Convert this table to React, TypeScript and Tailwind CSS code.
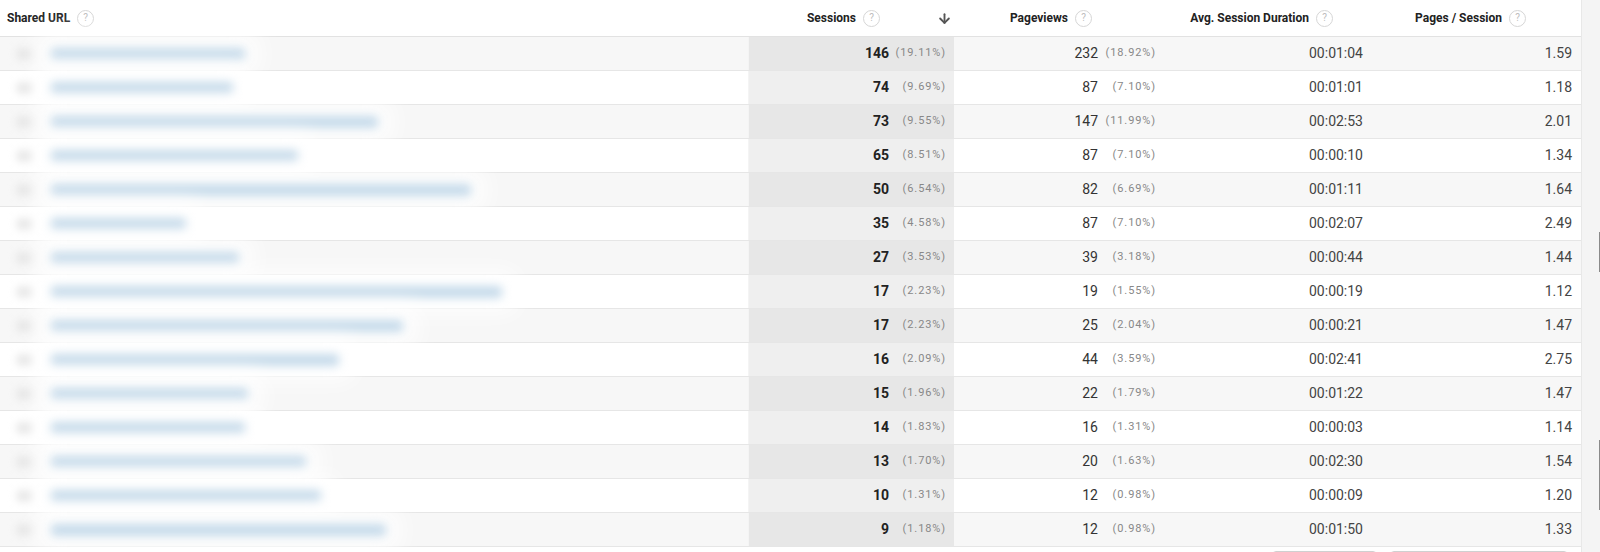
import { ArrowDown } from "lucide-react";

type Row = {
  sessions: string;
  sPct: string;
  pageviews: string;
  pPct: string;
  duration: string;
  pps: string;
  bar: number; // width of blurred url
};

const rows: Row[] = [
  { sessions: "146", sPct: "(19.11%)", pageviews: "232", pPct: "(18.92%)", duration: "00:01:04", pps: "1.59", bar: 194 },
  { sessions: "74", sPct: "(9.69%)", pageviews: "87", pPct: "(7.10%)", duration: "00:01:01", pps: "1.18", bar: 182 },
  { sessions: "73", sPct: "(9.55%)", pageviews: "147", pPct: "(11.99%)", duration: "00:02:53", pps: "2.01", bar: 327 },
  { sessions: "65", sPct: "(8.51%)", pageviews: "87", pPct: "(7.10%)", duration: "00:00:10", pps: "1.34", bar: 247 },
  { sessions: "50", sPct: "(6.54%)", pageviews: "82", pPct: "(6.69%)", duration: "00:01:11", pps: "1.64", bar: 420 },
  { sessions: "35", sPct: "(4.58%)", pageviews: "87", pPct: "(7.10%)", duration: "00:02:07", pps: "2.49", bar: 135 },
  { sessions: "27", sPct: "(3.53%)", pageviews: "39", pPct: "(3.18%)", duration: "00:00:44", pps: "1.44", bar: 188 },
  { sessions: "17", sPct: "(2.23%)", pageviews: "19", pPct: "(1.55%)", duration: "00:00:19", pps: "1.12", bar: 451 },
  { sessions: "17", sPct: "(2.23%)", pageviews: "25", pPct: "(2.04%)", duration: "00:00:21", pps: "1.47", bar: 352 },
  { sessions: "16", sPct: "(2.09%)", pageviews: "44", pPct: "(3.59%)", duration: "00:02:41", pps: "2.75", bar: 288 },
  { sessions: "15", sPct: "(1.96%)", pageviews: "22", pPct: "(1.79%)", duration: "00:01:22", pps: "1.47", bar: 197 },
  { sessions: "14", sPct: "(1.83%)", pageviews: "16", pPct: "(1.31%)", duration: "00:00:03", pps: "1.14", bar: 194 },
  { sessions: "13", sPct: "(1.70%)", pageviews: "20", pPct: "(1.63%)", duration: "00:02:30", pps: "1.54", bar: 255 },
  { sessions: "10", sPct: "(1.31%)", pageviews: "12", pPct: "(0.98%)", duration: "00:00:09", pps: "1.20", bar: 270 },
  { sessions: "9", sPct: "(1.18%)", pageviews: "12", pPct: "(0.98%)", duration: "00:01:50", pps: "1.33", bar: 335 },
];

function Help() {
  return (
    <span className="ml-[7px] flex h-[17px] w-[17px] items-center justify-center rounded-full border border-[#d6d6d6] text-[10px] font-normal leading-none text-[#bdbdbd]">
      ?
    </span>
  );
}

export default function App() {
  return (
    <div
      className="flex h-[552px] w-[1600px] overflow-hidden bg-white text-[#222]"
      style={{ fontFamily: "Roboto, 'Liberation Sans', sans-serif" }}
    >
      <div className="w-[1581px] shrink-0">
        {/* header */}
        <div className="flex h-[37px] items-center border-b border-[#e2e2e2] text-[12px] font-bold">
          <div className="flex w-[748px] items-center pl-[7px]">
            Shared URL
            <Help />
          </div>
          <div className="flex w-[206px] items-center justify-end pr-[2px]">
            Sessions
            <Help />
            <ArrowDown className="ml-[57px] text-[#555]" size={15} strokeWidth={3} />
          </div>
          <div className="flex w-[211px] items-center justify-end pr-[73px]">
            Pageviews
            <Help />
          </div>
          <div className="flex w-[244px] items-center justify-end pr-[76px]">
            Avg. Session Duration
            <Help />
          </div>
          <div className="flex w-[172px] items-center justify-end pr-[55px]">
            Pages / Session
            <Help />
          </div>
        </div>

        {rows.map((r, i) => {
          const odd = i % 2 === 0;
          return (
            <div
              key={i}
              className={`flex h-[34px] items-center border-b border-[#e6e6e6] ${odd ? "bg-[#f7f7f7]" : "bg-white"}`}
            >
              <div className="flex h-full w-[748px] items-center">
                <div className="ml-[17px] h-[10px] w-[16px] rounded bg-[#e2e2e2] blur-[4px]" />
                <div
                  className="ml-[18px] h-[12px] rounded bg-[#c5daea] shadow-[0_0_20px_16px_rgba(255,255,255,0.8)] blur-[5px]"
                  style={{ width: r.bar }}
                />
              </div>
              <div
                className={`flex h-full w-[206px] items-center justify-end border-l border-[#f4f4f4] pr-[8px] ${odd ? "bg-[#e7e7e7]" : "bg-[#efefef]"}`}
              >
                <span className="text-[14px] font-bold text-[#222]">{r.sessions}</span>
                <span className="ml-[6px] w-[51px] text-right text-[11px] tracking-[0.9px] text-[#888]">{r.sPct}</span>
              </div>
              <div className="flex h-full w-[211px] items-center justify-end pr-[9px]">
                <span className="text-[14px] text-[#333]">{r.pageviews}</span>
                <span className="ml-[5px] w-[53px] text-right text-[11px] tracking-[0.9px] text-[#888]">{r.pPct}</span>
              </div>
              <div className="flex h-full w-[244px] items-center justify-end pr-[46px] text-[14px] text-[#444]">
                {r.duration}
              </div>
              <div className="flex h-full w-[172px] items-center justify-end pr-[9px] text-[14px] text-[#444]">
                {r.pps}
              </div>
            </div>
          );
        })}

        {/* pagination, mostly cut off */}
        <div className="flex justify-end gap-[13px] pr-[13px] pt-[4px]">
          <div className="h-[28px] w-[105px] rounded-sm border border-[#d0d0d0]" />
          <div className="h-[28px] w-[178px] rounded-sm border border-[#d0d0d0]" />
        </div>
      </div>

      <div className="flex w-[19px] shrink-0 flex-col items-end border-l border-[#e8e8e8] bg-[#f4f4f4]">
        <div className="mt-[232px] h-[40px] w-[1px] bg-[#8a8a8a]" />
        <div className="mt-[168px] h-[70px] w-[1px] bg-[#8a8a8a]" />
      </div>
    </div>
  );
}
